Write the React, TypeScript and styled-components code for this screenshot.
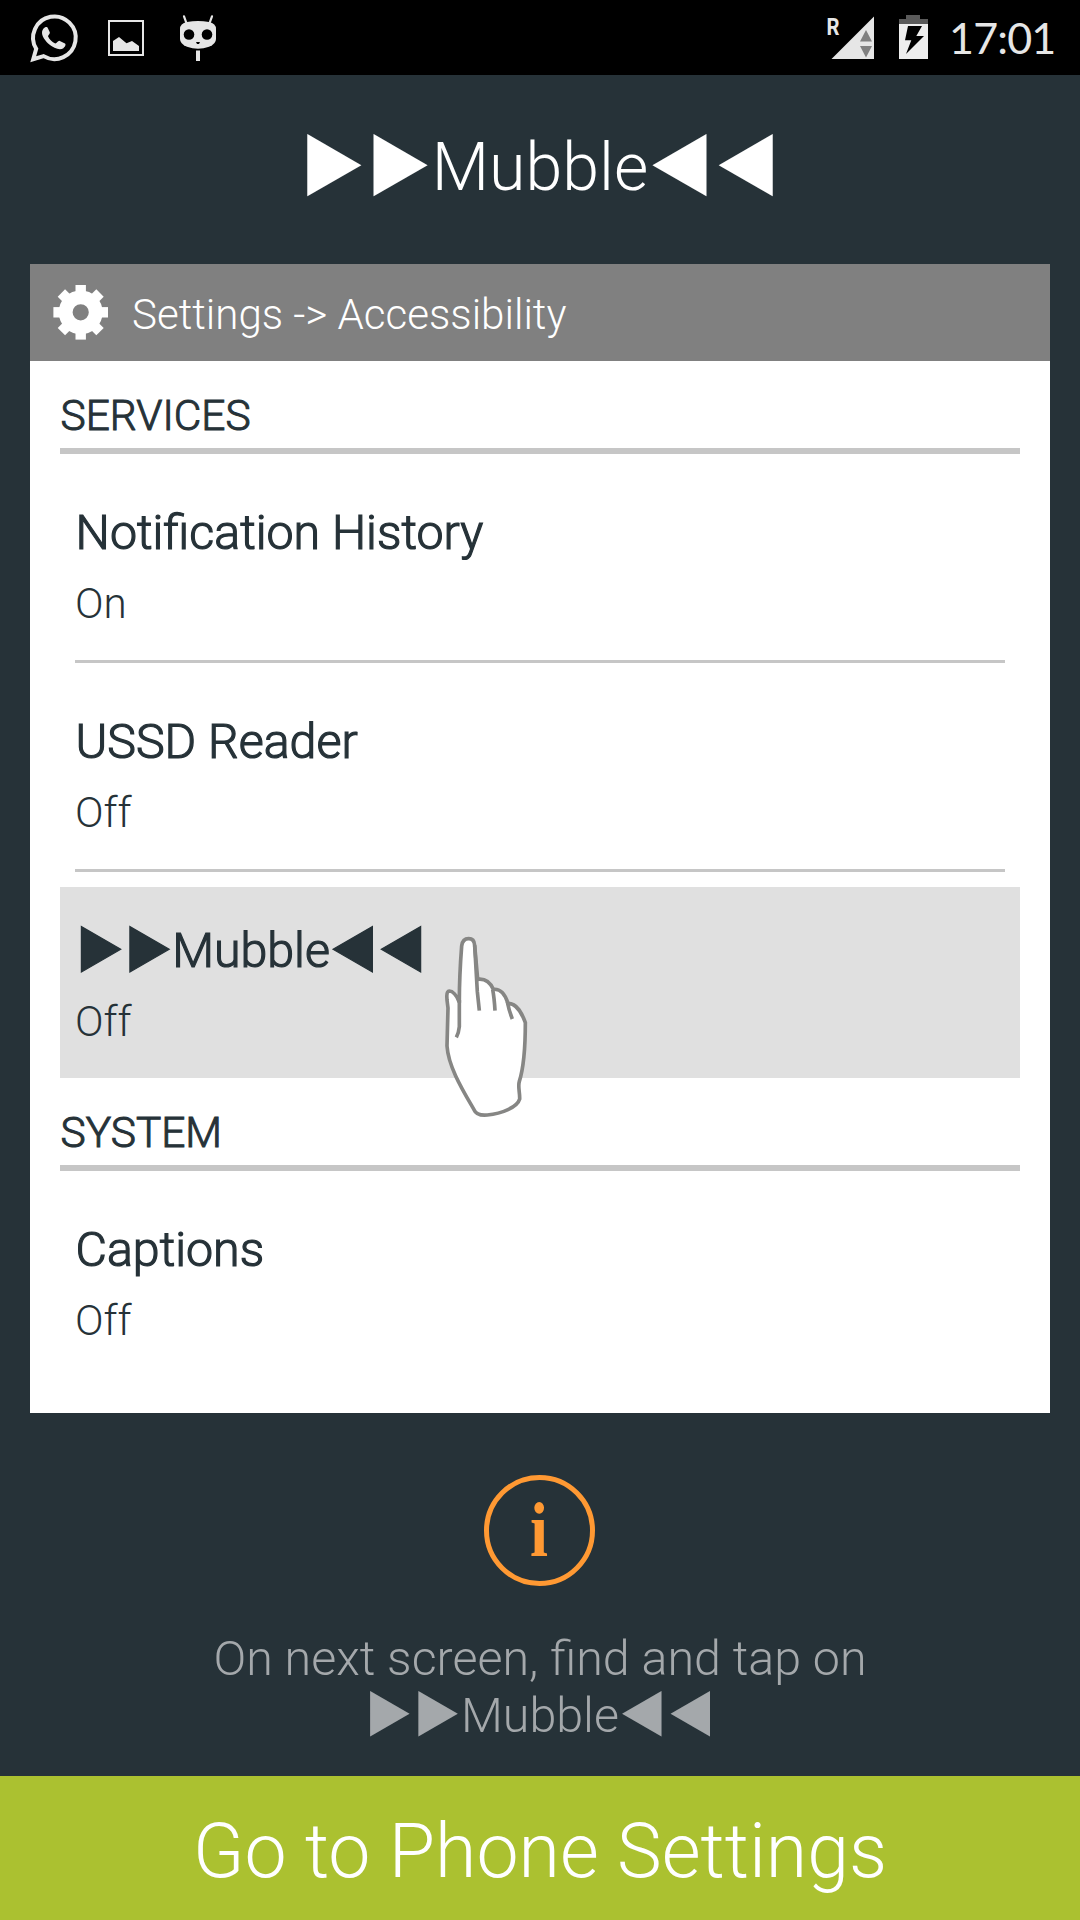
import React from "react";
import styled, { createGlobalStyle } from "styled-components";

const slate = "#263238";

const GlobalStyle = createGlobalStyle`
  body { margin: 0; background: ${slate}; }
  * { box-sizing: border-box; }
`;

const Screen = styled.div`
  width: 1080px;
  height: 1920px;
  display: flex;
  flex-direction: column;
  overflow: hidden;
  background: ${slate};
  color: ${slate};
  font-family: Roboto, "Noto Sans CJK SC", sans-serif;
  font-weight: 300;
  white-space: nowrap;
`;

const StatusBar = styled.header`
  flex: none;
  height: 75px;
  background: #000;
  display: flex;
  justify-content: space-between;
`;

const StatusGroup = styled.div`
  display: flex;
  height: 75px;
`;

const Clock = styled.time`
  width: 131px;
  padding-top: 12px;
  font-family: Lato, sans-serif;
  font-weight: 400;
  font-size: 43px;
  line-height: 52px;
  letter-spacing: -0.8px;
  color: #e6e6e6;
`;

const Title = styled.h1`
  flex: none;
  margin: 0;
  height: 189px;
  line-height: 185px;
  text-align: center;
  font-size: 66.3px;
  font-weight: 300;
  color: #fff;
`;

const Card = styled.main`
  flex: none;
  margin: 0 30px;
  height: 1149px;
  background: #fff;
`;

const CardHeader = styled.div`
  height: 97px;
  padding-left: 22.5px;
  display: flex;
  align-items: center;
  gap: 23.5px;
  background: #808080;
  color: #fff;
  font-size: 42.1px;
`;

const CardTitle = styled.span`
  line-height: 50px;
  padding-top: 4px;
`;

const Section = styled.section`
  padding: 0 30px;
`;

const SectionTitle = styled.h2`
  margin: 0 0 15px;
  height: 93px;
  padding: 26px 0 0 0.6px;
  border-bottom: 6px solid #c6c6c6;
  font-size: 42.4px;
  line-height: 58px;
  font-weight: 300;
  -webkit-text-stroke: 1px currentColor;
`;

const Row = styled.div<{ $active?: boolean }>`
  position: relative;
  height: 191px;
  padding: 34px 15px 0;
  background: ${(p) => (p.$active ? "#e0e0e0" : "transparent")};
`;

const RowTitle = styled.div`
  padding-left: 0.6px;
  font-size: 48.3px;
  line-height: 60px;
  font-weight: 300;
  -webkit-text-stroke: 1.2px currentColor;
`;

const RowState = styled.div`
  margin-top: 16px;
  font-size: 42.2px;
  line-height: 50px;
`;

const Divider = styled.hr`
  height: 3px;
  margin: 0 15px 15px;
  border: 0;
  background: #c6c6c6;
`;

const Hand = styled.svg`
  position: absolute;
  z-index: 2;
  left: 370px;
  top: 33px;
`;

const Hint = styled.div`
  flex: 1;
  display: flex;
  flex-direction: column;
  align-items: center;
  padding-top: 62px;
  color: #a4a8ab;
  font-size: 48.4px;
  line-height: 57px;
  text-align: center;
`;

const InfoBadge = styled.div`
  width: 111px;
  height: 111px;
  margin: 0 2px 44px 0;
  border: 5px solid #ff9933;
  border-radius: 50%;
  color: #ff9933;
  font: bold 78px/101px "Liberation Serif", serif;
`;

const InfoLetter = styled.span`
  display: block;
  transform: translate(-0.5px, -1px) scaleX(0.83);
`;

const Action = styled.button`
  flex: none;
  height: 144px;
  padding: 5px 0 0;
  border: 0;
  background: #abc130;
  color: #fff;
  font-family: inherit;
  font-weight: 300;
  font-size: 75.2px;
  line-height: 88px;
`;

const light = "#e6e6e6";

const NotificationIcons = () => (
  <svg width="230" height="75" viewBox="0 0 230 75">
    <path d="M33.2 59.2 L36.2 48.8 A21.3 21.3 0 1 1 43.6 56.1 Z" fill="none" stroke={light} strokeWidth="4" />
    <path
      d="M45.2 27.2 C46.5 26.6 47.4 27 48 28.4 L49.8 32.2 C50.3 33.6 48.3 35 48 36.2 C49.2 39.2 52.2 42.2 55.3 43.6 C56.8 43.4 57.8 40.8 59.3 40.8 L65 43.6 C66.3 44.6 65 47 63.4 48.2 C61 49.8 57.8 49.3 54.5 47.8 C49.8 45.7 45.3 41.3 43 36.8 C41.3 32.8 41.7 29.3 45.2 27.2 Z"
      fill={light}
    />
    <rect x="109" y="21" width="34" height="34" fill="none" stroke={light} strokeWidth="2" />
    <path d="M113 51 V41 L119 37 L126.5 43.2 L132 41 L139 46 V51 Z" fill={light} />
    <path d="M184 16.3 L186.4 23 M212 16.3 L209.6 23" stroke={light} strokeWidth="2.2" strokeLinecap="round" />
    <path
      d="M187 22 Q198 20 209 22 Q216 23.5 216 29 V39 Q216 44 209 46.8 Q198 50.6 187 46.8 Q180 44 180 39 V29 Q180 23.5 187 22 Z"
      fill={light}
    />
    <circle cx="189" cy="34.5" r="5.3" />
    <circle cx="207" cy="34.5" r="5.3" />
    <path d="M196 42 H200 L199 44 H197 Z" />
    <path d="M196 50.5 H200 V61 H196 Z" fill={light} />
  </svg>
);

const RadioIcons = () => (
  <svg width="124" height="75" viewBox="825 0 124 75">
    <text x="826.5" y="35" fontSize="24.5" fontWeight="700" textLength="13" lengthAdjust="spacingAndGlyphs" fill={light}>
      R
    </text>
    <path d="M831.5 59 L874 59 V16.5 Z" fill={light} />
    <path d="M866 30 L872 41.5 H860 Z M860 46 H872 L866 57.5 Z" fill="#808080" />
    <path d="M906 15 H920 V19 H928 V24 H899 V19 H906 Z" fill="#5a5a5a" />
    <rect x="899" y="24" width="29" height="35" fill="#eee" />
    <path d="M908 26 H922 L916.3 36 H924 L906 54 L911.3 40.3 H905 Z" />
  </svg>
);

const teeth = [0, 45, 90, 135, 180, 225, 270, 315];

const Gear = () => (
  <svg width="56" height="56" viewBox="-28 -28 56 56">
    <g transform="translate(-0.3 -0.7)" fill="#fff">
      {teeth.map((a) => (
        <rect key={a} x="-5.2" y="-27.3" width="10.4" height="12" transform={`rotate(${a})`} />
      ))}
      <circle r="15" fill="none" stroke="#fff" strokeWidth="13.8" />
    </g>
  </svg>
);

const PointingHand = () => (
  <Hand width="110" height="210" viewBox="0 0 330 630" fill="none" stroke="#868684" strokeWidth="11">
    <path
      d="M86 243 C80 226 68 213 58 213 C47 214 51 230 51 240 L54 264 L51 378 C55 440 98 510 132 569 C138 583 152 587 172 585 C215 581 262 562 269 537 C270 518 263 500 268 484 C282 440 286 380 286 308 C276 280 262 250 234 250 C224 218 210 206 190 208 C180 186 166 175 143 178 L134 76 C133 60 124 56 116 56 C106 56 97 61 95 78 C91 130 88 190 88 243 Z"
      fill="#fff"
    />
    <path d="M88 240 V320 Q86 340 79 352 M134 76 L142 215 L148 272 M188 208 Q193 235 195 272 M232 246 Q237 272 247 297" />
  </Hand>
);

const Item = ({ title, state, active }: { title: string; state: string; active?: boolean }) => (
  <Row $active={active}>
    <RowTitle>{title}</RowTitle>
    <RowState>{state}</RowState>
    {active && <PointingHand />}
  </Row>
);

const brand = "\u25B6\u25B6Mubble\u25C0\u25C0";

export default function App() {
  return (
    <Screen>
      <GlobalStyle />
      <StatusBar>
        <NotificationIcons />
        <StatusGroup>
          <RadioIcons />
          <Clock>17:01</Clock>
        </StatusGroup>
      </StatusBar>
      <Title>{brand}</Title>
      <Card>
        <CardHeader>
          <Gear />
          <CardTitle>Settings -&gt; Accessibility</CardTitle>
        </CardHeader>
        <Section>
          <SectionTitle>SERVICES</SectionTitle>
          <Item title="Notification History" state="On" />
          <Divider />
          <Item title="USSD Reader" state="Off" />
          <Divider />
          <Item title={brand} state="Off" active />
        </Section>
        <Section>
          <SectionTitle>SYSTEM</SectionTitle>
          <Item title="Captions" state="Off" />
        </Section>
      </Card>
      <Hint>
        <InfoBadge>
          <InfoLetter>i</InfoLetter>
        </InfoBadge>
        <div>On next screen, find and tap on</div>
        <div>{brand}</div>
      </Hint>
      <Action>Go to Phone Settings</Action>
    </Screen>
  );
}
